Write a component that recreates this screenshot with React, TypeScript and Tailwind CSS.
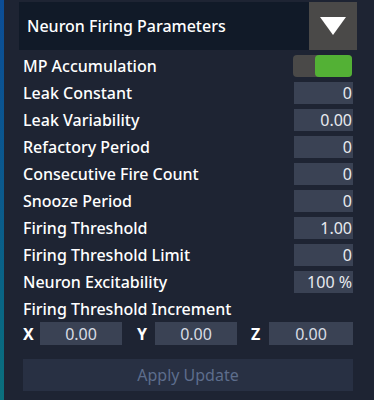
const rows: { label: string; value: string }[] = [
  { label: "Leak Constant", value: "0" },
  { label: "Leak Variability", value: "0.00" },
  { label: "Refactory Period", value: "0" },
  { label: "Consecutive Fire Count", value: "0" },
  { label: "Snooze Period", value: "0" },
  { label: "Firing Threshold", value: "1.00" },
  { label: "Firing Threshold Limit", value: "0" },
  { label: "Neuron Excitability", value: "100 %" },
]

export default function App() {
  return (
    <div className="flex w-[374px] h-[400px] bg-[#1e2433] text-white overflow-hidden" style={{ fontFamily: '"Noto Sans", "Open Sans", sans-serif' }}>
      <div className="w-[4px] h-full bg-gradient-to-b from-[#0c4d96] via-[#0b5a8c] to-[#0b6f7c]"></div>
      <div className="flex-1 flex flex-col pt-[2px]">
        {/* header dropdown */}
        <div className="flex h-[48px] ml-[15px] w-[338px] bg-[#111a28]">
          <div className="flex-1 flex items-center pl-[8px] text-[16px] font-medium">Neuron Firing Parameters</div>
          <div className="w-[48px] h-full bg-[#4a4948] flex items-center justify-center">
            <svg width="26" height="18" viewBox="0 0 26 18">
              <polygon points="0,0 26,0 13,18" fill="white" />
            </svg>
          </div>
        </div>

        <div className="flex flex-col pl-[19px] pr-[21px] mt-[2px]">
          <div className="flex items-center justify-between h-[27px]">
            <span className="text-[16px] font-medium">MP Accumulation</span>
            <div className="flex w-[59px] h-[22px] rounded-[4px] bg-[#4a4948] mr-[1px]">
              <div className="ml-auto w-[37px] h-full rounded-[4px] bg-[#53b135]"></div>
            </div>
          </div>
          {rows.map((r) => (
            <div key={r.label} className="flex items-center justify-between h-[27px]">
              <span className="text-[16px] font-medium">{r.label}</span>
              <div className="w-[59px] h-[22px] bg-[#3a4254] flex items-center justify-end pr-[1px] text-[16px] text-[#e8eaef]">{r.value}</div>
            </div>
          ))}
          <div className="flex items-center h-[27px]">
            <span className="text-[16px] font-medium">Firing Threshold Increment</span>
          </div>
          <div className="flex items-center h-[23px]">
            <span className="w-[17px] text-[16px] font-bold">X</span>
            <div className="w-[82px] h-[23px] bg-[#3a4254] flex items-center justify-center text-[16px] text-[#d8dce4]">0.00</div>
            <span className="w-[18px] ml-[15px] text-[16px] font-bold">Y</span>
            <div className="w-[82px] h-[23px] bg-[#3a4254] flex items-center justify-center text-[16px] text-[#d8dce4]">0.00</div>
            <span className="w-[18px] ml-[14px] text-[16px] font-bold">Z</span>
            <div className="flex-1 h-[23px] bg-[#3a4254] flex items-center justify-center text-[16px] text-[#d8dce4]">0.00</div>
          </div>
          <div className="mt-[14px] h-[32px] bg-[#283043] flex items-center justify-center text-[16px] text-[#5d6d8c]">Apply Update</div>
        </div>
      </div>
    </div>
  )
}
